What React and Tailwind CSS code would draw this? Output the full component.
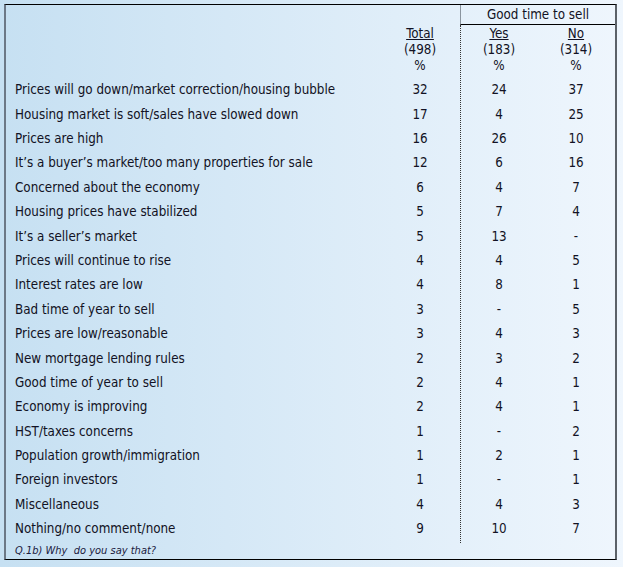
const rows = [
  ['Prices will go down/market correction/housing bubble', '32', '24', '37'],
  ['Housing market is soft/sales have slowed down', '17', '4', '25'],
  ['Prices are high', '16', '26', '10'],
  ['It\u2019s a buyer\u2019s market/too many properties for sale', '12', '6', '16'],
  ['Concerned about the economy', '6', '4', '7'],
  ['Housing prices have stabilized', '5', '7', '4'],
  ['It\u2019s a seller\u2019s market', '5', '13', '-'],
  ['Prices will continue to rise', '4', '4', '5'],
  ['Interest rates are low', '4', '8', '1'],
  ['Bad time of year to sell', '3', '-', '5'],
  ['Prices are low/reasonable', '3', '4', '3'],
  ['New mortgage lending rules', '2', '3', '2'],
  ['Good time of year to sell', '2', '4', '1'],
  ['Economy is improving', '2', '4', '1'],
  ['HST/taxes concerns', '1', '-', '2'],
  ['Population growth/immigration', '1', '2', '1'],
  ['Foreign investors', '1', '-', '1'],
  ['Miscellaneous', '4', '4', '3'],
  ['Nothing/no comment/none', '9', '10', '7'],
];

const font = { fontFamily: '"DejaVu Sans Condensed", "DejaVu Sans", sans-serif' };

export default function App() {
  return (
    <div
      className="w-[623px] h-[567px] bg-gradient-to-r from-[#c6e0f2] to-[#eff6fd] pt-[4px] pl-[4px] text-[#121224] text-[13.3px]"
      style={font}
    >
      <div className="w-[613px] h-[556px] border-t border-b border-black border-l-2 border-l-[#6c7886] border-r-2 border-r-[#5b6168] flex flex-col">
        <div className="flex flex-1">
          {/* labels + total */}
          <div className="w-[454px] flex flex-col">
            <div className="h-[21px]" />
            <div className="flex leading-[16px]">
              <div className="flex-1" />
              <div className="w-[80px] flex flex-col items-center">
                <span className="underline">Total</span>
                <span>(498)</span>
                <span>%</span>
              </div>
            </div>
            <div className="h-[4px]" />
            {rows.map((r) => (
              <div key={r[0]} className="h-[24.4px] flex items-center">
                <span className="flex-1 pl-[9px] whitespace-nowrap">{r[0]}</span>
                <span className="w-[80px] text-center">{r[1]}</span>
              </div>
            ))}
          </div>

          {/* good time to sell */}
          <div className="flex-1 flex flex-col">
            <div className="h-[20px] border-b border-black border-l border-l-[#8a949e] flex items-center justify-center">
              Good time to sell
            </div>
            <div className="flex-1 border-l border-dotted border-l-[#333] pt-[1px]">
              <div className="flex leading-[16px]">
                <div className="w-[76px] flex flex-col items-center">
                  <span className="underline">Yes</span>
                  <span>(183)</span>
                  <span>%</span>
                </div>
                <div className="w-[78px] flex flex-col items-center">
                  <span className="underline">No</span>
                  <span>(314)</span>
                  <span>%</span>
                </div>
              </div>
              <div className="h-[4px]" />
              {rows.map((r) => (
                <div key={r[0]} className="h-[24.4px] flex items-center">
                  <span className="w-[76px] text-center">{r[2]}</span>
                  <span className="w-[78px] text-center">{r[3]}</span>
                </div>
              ))}
            </div>
          </div>
        </div>
        <div className="h-[16px] flex items-center pl-[9px] italic text-[11px] text-[#1a1a40] whitespace-pre">
          Q.1b) Why  do you say that?
        </div>
      </div>
    </div>
  );
}
